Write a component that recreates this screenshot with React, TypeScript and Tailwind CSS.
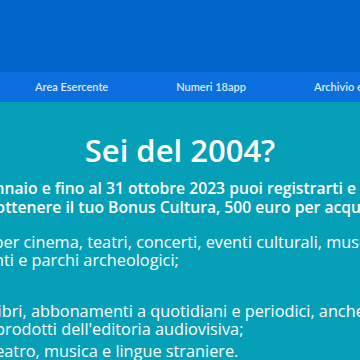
export default function App() {
  return (
    <div className="w-[360px] h-[360px] overflow-hidden bg-[#05a0b8] font-['Open_Sans','Lato',sans-serif] text-white">
      {/* Header */}
      <div className="h-[72px] bg-[#0066cc]" />

      {/* Nav */}
      <nav className="h-[30px] bg-[#0a6edf] flex items-center gap-[68px] pl-[35px] whitespace-nowrap font-['Lato',sans-serif] text-[11px] font-semibold text-[#dcebff]">
        <span>Area Esercente</span>
        <span>Numeri 18app</span>
        <span>Archivio edizioni precedenti</span>
      </nav>

      {/* Hero */}
      <section className="pt-[31px]">
        <h1 className="text-center text-[31px] leading-[34px] font-semibold">Sei del 2004?</h1>

        <div className="mt-[12px] flex flex-col items-center whitespace-nowrap text-[15.7px] leading-[19px] font-semibold">
          <p className="mr-[76px]">Dal 1° gennaio e fino al 31 ottobre 2023 puoi registrarti e</p>
          <p className="ml-[44px]">ottenere il tuo Bonus Cultura, 500 euro per acquistare:</p>
        </div>

        <ul className="mt-[16px] -ml-[75px] whitespace-nowrap text-[16.3px] leading-[18px]">
          <li>
            <p>i biglietti per cinema, teatri, concerti, eventi culturali, musei,</p>
            <p>monumenti e parchi archeologici;</p>
          </li>
          <li className="mt-[33px]">
            <p>acquisto libri, abbonamenti a quotidiani e periodici, anche in</p>
            <p>formato, prodotti dell'editoria audiovisiva;</p>
          </li>
          <li className="mt-[4px]">
            <p>corso di teatro, musica e lingue straniere.</p>
          </li>
        </ul>
      </section>
    </div>
  )
}
